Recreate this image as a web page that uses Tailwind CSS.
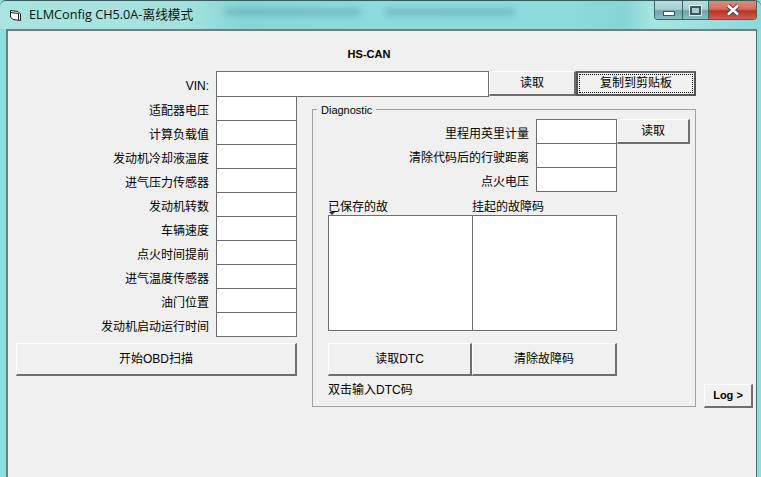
<!DOCTYPE html>
<html lang="zh">

<head>
    <meta charset="UTF-8">
    <title>ELMConfig CH5.0A-离线模式</title>
    <script src="https://cdn.jsdelivr.net/npm/@tailwindcss/browser@4"></script>
</head>

<body class="w-[761px] h-[477px] overflow-hidden bg-[#8fdede] font-['Liberation_Sans','Noto_Sans_CJK_SC',sans-serif] text-[12px] text-black">
    <!-- title bar -->
    <div class="relative h-[29px] flex items-start border-t border-[#3c5a5c] rounded-tl-[6px] rounded-tr-[6px] bg-[linear-gradient(90deg,#a9e4e0_0%,#a5e2de_24%,#86d6d6_32%,#8ddcdc_50%,#8cdcdc_75%,#86d4d4_82%,#a6e6e2_86%,#8ed8d8_100%)]">
        <!-- blurred window showing through the glass -->
        <div class="absolute left-[225px] top-[8px] w-[135px] h-[6px] bg-[#5a9ea4]/60 blur-[3px]"></div>
        <div class="absolute left-[385px] top-[8px] w-[130px] h-[6px] bg-[#5a9ea4]/60 blur-[3px]"></div>

        <svg class="relative mt-[8px] ml-[9px]" width="13" height="13" viewBox="0 0 13 13">
            <path d="M1.5 1.5 9 2.5l2.5 2.5v6.5L4 10.5 1.5 8z" fill="#fff" stroke="#1c1c1c" />
            <path d="M1.5 3.5 9.5 4.5v6.5" fill="none" stroke="#1c1c1c" />
        </svg>
        <span class="relative ml-[7px] mt-[5px] leading-[16px] font-['Open_Sans','Noto_Sans_CJK_SC',sans-serif] text-[12.7px] text-[#111]">ELMConfig CH5.0A-离线模式</span>
        <div class="relative ml-auto mr-[4px] flex h-[19px] border border-t-0 border-[#45606a] rounded-b-[4px] overflow-hidden">
            <div class="w-[28px] flex items-center justify-center bg-[linear-gradient(180deg,#b7dede_0%,#a6d0d2_45%,#6fa3a8_55%,#86c0c2_100%)] border-r border-[#45606a]">
                <div class="w-[12px] h-[5px] mt-[6px] bg-white border border-[#3d5560]"></div>
            </div>
            <div class="w-[26px] flex items-center justify-center bg-[linear-gradient(180deg,#b7dede_0%,#a6d0d2_45%,#6fa3a8_55%,#86c0c2_100%)] border-r border-[#45606a]">
                <div class="w-[11px] h-[9px] bg-[#9fcfd0] border-2 border-[#3d5560] outline outline-white/70"></div>
            </div>
            <div class="w-[47px] flex items-center justify-center bg-[linear-gradient(180deg,#dd8a7c_0%,#d0705f_45%,#c0301f_55%,#c9604f_100%)]">
                <svg width="14" height="12" viewBox="0 0 14 12">
                    <path d="M2 1.5 12 10.5M12 1.5 2 10.5" stroke="#3d4650" stroke-width="4.5" />
                    <path d="M2 1.5 12 10.5M12 1.5 2 10.5" stroke="#fff" stroke-width="2.5" />
                </svg>
            </div>
        </div>
    </div>

    <!-- client area -->
    <div class="ml-[6px] mr-[4px] h-[448px] border-2 border-b-0 border-[#6f7f80] bg-[#f0f0f0] border-r border-r-[#3f6f70]">
        <p class="pt-[16px] h-[40px] text-center font-bold text-[11px] leading-[14px] w-[722px]">HS-CAN</p>

        <!-- VIN row -->
        <div class="flex h-[25px]">
            <label class="w-[201px] text-right leading-[30px]">VIN:</label>
            <div class="ml-[7px] w-[273px] h-[26px] bg-white border border-[#6e6e6e]"></div>
            <button class="w-[87px] bg-[#f0f0f0] border-t border-l border-white border-r-2 border-b-2 border-r-[#6e6e6e] border-b-[#6e6e6e]">读取</button>
            <button class="w-[120px] border-2 border-[#555] border-t-[#666] p-[1px]">
                <span class="block border border-dotted border-black h-full leading-[17px]">复制到剪贴板</span>
            </button>
        </div>

        <div class="flex">
            <!-- left column -->
            <div class="w-[289px]">
                <div class="grid grid-cols-[201px_81px] gap-x-[7px] auto-rows-[24px]">
                    <span class="text-right leading-[31px]">适配器电压</span><div class="bg-white border border-[#6e6e6e] h-[25px]"></div>
                    <span class="text-right leading-[31px]">计算负载值</span><div class="bg-white border border-[#6e6e6e] h-[25px]"></div>
                    <span class="text-right leading-[31px]">发动机冷却液温度</span><div class="bg-white border border-[#6e6e6e] h-[25px]"></div>
                    <span class="text-right leading-[31px]">进气压力传感器</span><div class="bg-white border border-[#6e6e6e] h-[25px]"></div>
                    <span class="text-right leading-[31px]">发动机转数</span><div class="bg-white border border-[#6e6e6e] h-[25px]"></div>
                    <span class="text-right leading-[31px]">车辆速度</span><div class="bg-white border border-[#6e6e6e] h-[25px]"></div>
                    <span class="text-right leading-[31px]">点火时间提前</span><div class="bg-white border border-[#6e6e6e] h-[25px]"></div>
                    <span class="text-right leading-[31px]">进气温度传感器</span><div class="bg-white border border-[#6e6e6e] h-[25px]"></div>
                    <span class="text-right leading-[31px]">油门位置</span><div class="bg-white border border-[#6e6e6e] h-[25px]"></div>
                    <span class="text-right leading-[31px]">发动机启动运行时间</span><div class="bg-white border border-[#6e6e6e] h-[25px]"></div>
                </div>
                <button class="mt-[7px] ml-[8px] w-[281px] h-[33px] border-t border-l border-white border-r-2 border-b-2 border-r-[#6e6e6e] border-b-[#6e6e6e]">开始OBD扫描</button>
            </div>

            <!-- diagnostic group -->
            <div class="relative ml-[15px] mt-[13px] w-[384px] h-[298px] border border-[#a0a0a0] pl-[15px] pt-[9px]">
                <span class="absolute left-[4px] top-[-6px] bg-[#f0f0f0] px-[4px] leading-[13px] text-[11px]">Diagnostic</span>
                <div class="grid grid-cols-[201px_81px_73px] gap-x-[7px] auto-rows-[24px]">
                    <span class="text-right leading-[30px]">里程用英里计量</span>
                    <div class="bg-white border border-[#6e6e6e] h-[25px]"></div>
                    <button class="-ml-[7px] w-[73px] h-[25px] border-t border-l border-white border-r-2 border-b-2 border-r-[#6e6e6e] border-b-[#6e6e6e]">读取</button>
                    <span class="text-right leading-[30px]">清除代码后的行驶距离</span>
                    <div class="bg-white border border-[#6e6e6e] h-[25px]"></div>
                    <span></span>
                    <span class="text-right leading-[30px]">点火电压</span>
                    <div class="bg-white border border-[#6e6e6e] h-[25px]"></div>
                    <span></span>
                </div>
                <div class="relative flex mt-[8px] h-[16px] leading-[16px]">
                    <span class="w-[144px]">已保存的故</span>
                    <span>挂起的故障码</span>
                    <svg class="absolute left-[1px] top-[13px]" width="6" height="3" viewBox="0 0 6 3">
                        <path d="M0 0h6L3 3z" fill="#333" />
                    </svg>
                </div>
                <div class="flex w-[289px] h-[116px] bg-white border border-[#6e6e6e]">
                    <div class="w-[144px] border-r border-[#6e6e6e]"></div>
                </div>
                <div class="flex mt-[12px] h-[33px]">
                    <button class="w-[144px] border-t border-l border-white border-r-2 border-b-2 border-r-[#6e6e6e] border-b-[#6e6e6e]">读取DTC</button>
                    <button class="w-[145px] border-t border-l border-white border-r-2 border-b-2 border-r-[#6e6e6e] border-b-[#6e6e6e]">清除故障码</button>
                </div>
                <p class="mt-[6px] leading-[16px]">双击输入DTC码</p>
            </div>

            <!-- log button -->
            <button class="ml-[8px] mt-[288px] w-[49px] h-[24px] font-bold text-[11px] border-t border-l border-white border-r-2 border-b-2 border-r-[#6e6e6e] border-b-[#6e6e6e]">Log &gt;</button>
        </div>
    </div>
</body>

</html>
